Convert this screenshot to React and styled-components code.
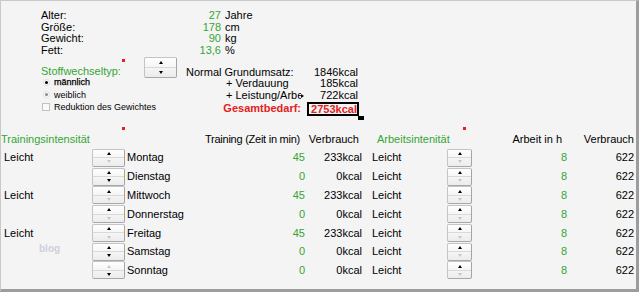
import React from 'react';
import styled, { createGlobalStyle } from 'styled-components';

const GREEN = '#35a535';
const RED = '#e42121';

const GlobalStyle = createGlobalStyle`
  html, body { margin: 0; padding: 0; background: #fff; }
  body {
    font-family: "Liberation Sans", Arial, sans-serif;
    font-size: 11px;
    color: #000;
  }
`;

const Window = styled.div`
  box-sizing: border-box;
  width: 639px;
  height: 292px;
  background: #f4f4f4;
  border-top: 1px solid #c9c9c9;
  border-left: 1px solid #c9c9c9;
  border-right: 3px solid #9d9d9d;
  border-bottom: 3px solid #9d9d9d;
  overflow: hidden;
`;

const Marker = styled.span`
  position: absolute;
  width: 3px;
  height: 3px;
  background: ${RED};
  left: ${p => p.$x}px;
  top: ${p => p.$y}px;
`;

/* ---------- personal data ---------- */

const Personal = styled.div`
  display: grid;
  grid-template-columns: 140px 40px auto;
  grid-auto-rows: 11.7px;
  line-height: 11.7px;
  padding: 9px 0 0 40px;
`;

const Value = styled.span`
  color: ${GREEN};
  text-align: right;
`;

const Unit = styled.span`
  padding-left: 4px;
`;

/* ---------- metabolism ---------- */

const Middle = styled.div`
  position: relative;
  display: flex;
  padding-left: 40px;
`;

const LeftCol = styled.div`
  width: 145px;
  display: flex;
  flex-direction: column;
`;

const TypeRow = styled.div`
  height: 19px;
  display: flex;
  align-items: flex-start;
`;

const TypeLabel = styled.span`
  color: ${GREEN};
  line-height: 11.7px;
  margin-top: 9.3px;
`;

const StepperSlot = styled.div`
  margin-left: auto;
  margin-right: 9px;
`;

const Option = styled.label`
  height: 12.5px;
  display: flex;
  align-items: center;
  gap: 4px;
  font-size: 9px;
  white-space: nowrap;
  ${p => p.$selected && '-webkit-text-stroke: 0.25px #000;'}
`;

const RadioMark = styled.span`
  box-sizing: border-box;
  width: 7px;
  height: 7px;
  margin-left: 2px;
  border-radius: 50%;
  border: 1px solid #dedede;
  background: #fbfbfb;
  display: flex;
  align-items: center;
  justify-content: center;
  &::after {
    content: '';
    width: 3px;
    height: 3px;
    border-radius: 50%;
    background: ${p => (p.$on ? '#000' : '#8a8a8a')};
  }
`;

const CheckMark = styled.span`
  box-sizing: border-box;
  width: 8px;
  height: 8px;
  margin-left: 1px;
  border: 1px solid #c2c2c2;
  background: #fafafa;
`;

const Calc = styled.div`
  margin-top: 10px;
  display: grid;
  grid-template-columns: 119px 55px;
  grid-template-rows: repeat(3, 11.7px) 14px;
  line-height: 11.7px;
  white-space: nowrap;
`;

const CalcLabel = styled.span`
  padding-left: ${p => p.$indent || 0}px;
  overflow: hidden;
`;

const Clipped = styled.span`
  display: inline-block;
  max-width: 75px;
  overflow: hidden;
  vertical-align: top;
`;

const ClipArrow = styled.span`
  display: inline-block;
  vertical-align: top;
  margin-top: 4px;
  width: 0;
  height: 0;
  border-top: 2px solid transparent;
  border-bottom: 2px solid transparent;
  border-left: 3px solid #000;
`;

const CalcValue = styled.span`
  text-align: right;
  padding-right: 2px;
`;

const TotalLabel = styled.span`
  color: ${RED};
  font-weight: bold;
  text-align: right;
  padding-right: 4px;
  line-height: 12px;
`;

const TotalBox = styled.span`
  position: relative;
  box-sizing: border-box;
  width: 52px;
  height: 14px;
  margin-left: 2px;
  border: 2px solid #000;
  color: ${RED};
  font-weight: bold;
  text-align: right;
  line-height: 10px;
  &::after {
    content: '';
    position: absolute;
    right: -7px;
    bottom: -6px;
    width: 6px;
    height: 4px;
    background: #000;
  }
`;

/* ---------- stepper ---------- */

const StepperBox = styled.div`
  box-sizing: border-box;
  width: ${p => p.$w}px;
  height: ${p => p.$h}px;
  align-self: center;
  display: flex;
  flex-direction: column;
  border: 1px solid #c4c4c4;
  border-right-color: #a4a4a4;
  border-bottom-color: #a8a8a8;
  border-radius: 2px;
  background: linear-gradient(#fefefe, #ececec);
  overflow: hidden;
`;

const StepHalf = styled.div`
  flex: 1;
  display: flex;
  align-items: center;
  justify-content: center;
  & + & {
    border-top: 1px solid #d9d9d9;
  }
`;

const Arrow = styled.span`
  width: 0;
  height: 0;
  border-left: 2.5px solid transparent;
  border-right: 2.5px solid transparent;
  ${p =>
    p.$dir === 'up'
      ? `border-bottom: 3px solid ${p.$off ? '#c6c6c6' : '#000'};`
      : `border-top: 3px solid ${p.$off ? '#c6c6c6' : '#000'};`}
`;

function Stepper({ w = 33, h = 18, up = true, down = true }) {
  return (
    <StepperBox $w={w} $h={h}>
      <StepHalf><Arrow $dir="up" $off={!up} /></StepHalf>
      <StepHalf><Arrow $dir="down" $off={!down} /></StepHalf>
    </StepperBox>
  );
}

/* ---------- weekly table ---------- */

const Table = styled.div`
  position: relative;
  margin-top: 17px;
  display: grid;
  grid-template-columns: 91px 33px 92px 88px 57px 85px 25px 95px 67px;
  grid-template-rows: 15.5px repeat(7, 18.8px);
  white-space: nowrap;
`;

const Head = styled.span`
  line-height: 12px;
  grid-column: ${p => p.$col || 'auto'};
  text-align: ${p => p.$align || 'left'};
  padding-left: ${p => p.$pl || 0}px;
  padding-right: ${p => p.$pr || 0}px;
  letter-spacing: ${p => p.$tight ? '-0.25px' : 'normal'};
  color: ${p => (p.$green ? GREEN : '#000')};
`;

const Cell = styled.span`
  line-height: 18.8px;
  text-align: ${p => p.$align || 'left'};
  padding-left: ${p => p.$pl || 0}px;
  padding-right: ${p => p.$pr || 0}px;
  color: ${p => (p.$green ? GREEN : '#000')};
`;

const Watermark = styled.span`
  position: absolute;
  left: 38px;
  top: 111px;
  font-size: 10px;
  font-weight: bold;
  line-height: 10px;
  color: #cdd0da;
`;

const days = [
  { day: 'Montag', level: 'Leicht', min: 45, kcal: '233kcal', up: true, down: false },
  { day: 'Dienstag', level: '', min: 0, kcal: '0kcal', up: true, down: true },
  { day: 'Mittwoch', level: 'Leicht', min: 45, kcal: '233kcal', up: true, down: false },
  { day: 'Donnerstag', level: '', min: 0, kcal: '0kcal', up: true, down: false },
  { day: 'Freitag', level: 'Leicht', min: 45, kcal: '233kcal', up: true, down: false },
  { day: 'Samstag', level: '', min: 0, kcal: '0kcal', up: true, down: true },
  { day: 'Sonntag', level: '', min: 0, kcal: '0kcal', up: false, down: true },
];

export default function App() {
  return (
    <Window>
      <GlobalStyle />

      <Personal>
        <span>Alter:</span><Value>27</Value><Unit>Jahre</Unit>
        <span>Größe:</span><Value>178</Value><Unit>cm</Unit>
        <span>Gewicht:</span><Value>90</Value><Unit>kg</Unit>
        <span>Fett:</span><Value>13,6</Value><Unit>%</Unit>
      </Personal>

      <Middle>
        <Marker $x={121} $y={2} />
        <LeftCol>
          <TypeRow>
            <TypeLabel>Stoffwechseltyp:</TypeLabel>
            <StepperSlot>
              <Stepper w={33} h={21} />
            </StepperSlot>
          </TypeRow>
          <Option $selected><RadioMark $on />männlich</Option>
          <Option><RadioMark />weiblich</Option>
          <Option><CheckMark />Reduktion des Gewichtes</Option>
        </LeftCol>

        <Calc>
          <CalcLabel>Normal Grundumsatz:</CalcLabel>
          <CalcValue>1846kcal</CalcValue>
          <CalcLabel $indent={40}>+ Verdauung</CalcLabel>
          <CalcValue>185kcal</CalcValue>
          <CalcLabel $indent={40}>
            <Clipped>+ Leistung/Arbeit</Clipped>
            <ClipArrow />
          </CalcLabel>
          <CalcValue>722kcal</CalcValue>
          <TotalLabel>Gesamtbedarf:</TotalLabel>
          <TotalBox>2753kcal</TotalBox>
        </Calc>
      </Middle>

      <Table>
        <Marker $x={121} $y={-6} />
        <Marker $x={462} $y={-6} />

        <Head $col="1 / 3" $green>Trainingsintensität</Head>
        <Head $col="3 / 5" $pl={80} $tight>Training (Zeit in min)</Head>
        <Head $align="right" $pr={3}>Verbrauch</Head>
        <Head $col="6 / 8" $pl={15} $green>Arbeitsintenität</Head>
        <Head $align="right" $pr={5}>Arbeit in h</Head>
        <Head $align="right">Verbrauch</Head>

        {days.map(d => (
          <React.Fragment key={d.day}>
            <Cell $pl={3}>{d.level}</Cell>
            <Stepper w={33} h={18} up={d.up} down={d.down} />
            <Cell $pl={2}>{d.day}</Cell>
            <Cell $align="right" $green>{d.min}</Cell>
            <Cell $align="right">{d.kcal}</Cell>
            <Cell $pl={10}>Leicht</Cell>
            <Stepper w={25} h={18} up down={false} />
            <Cell $align="right" $green>8</Cell>
            <Cell $align="right">622</Cell>
          </React.Fragment>
        ))}

        <Watermark>blog</Watermark>
      </Table>
    </Window>
  );
}
